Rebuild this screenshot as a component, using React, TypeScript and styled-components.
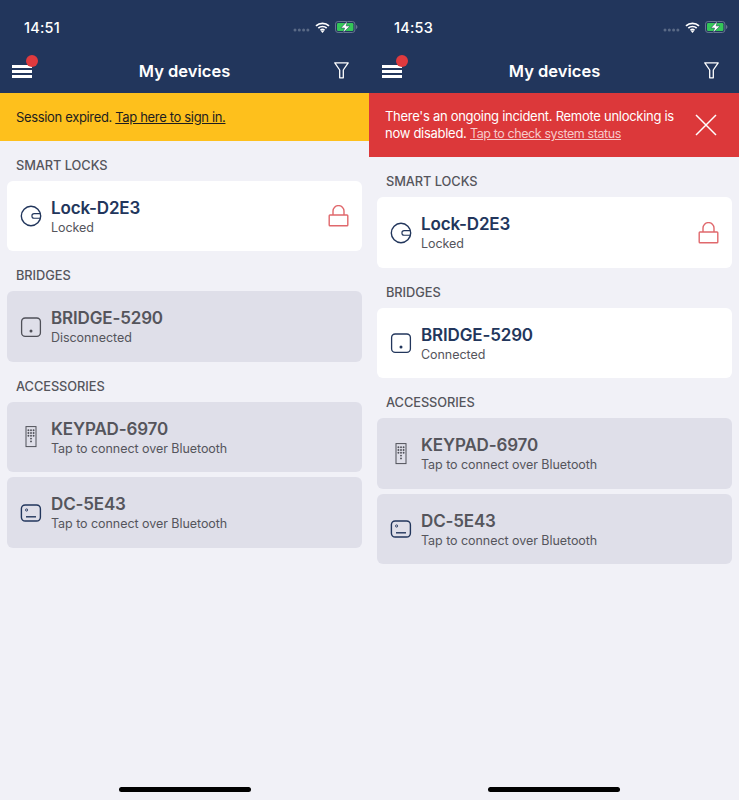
import React from 'react';
import styled, { createGlobalStyle } from 'styled-components';

const GlobalStyle = createGlobalStyle`
  html, body {
    margin: 0;
    padding: 0;
    background: #f1f1f7;
    font-family: Inter, "Liberation Sans", sans-serif;
  }
`;

type IconKind = 'lock' | 'bridge' | 'keypad' | 'dc';

interface Device {
  name: string;
  status: string;
  icon: IconKind;
  active?: boolean;
  locked?: boolean;
}

interface Section {
  title: string;
  devices: Device[];
}

const DeviceIcon = ({ kind, muted }: { kind: IconKind; muted: boolean }) => {
  const color = muted ? '#4f5058' : '#22365c';
  if (kind === 'lock') {
    return (
      <svg width="22" height="22" viewBox="0 0 22 22" fill="none" stroke={color} strokeWidth="1.4">
        <circle cx="11" cy="11" r="9.7" />
        <path d="M20.500 8.600h-6.300a2.300 2.300 0 0 0 0 4.600h6.300" strokeWidth="1.1" />
      </svg>
    );
  }
  if (kind === 'bridge') {
    return (
      <svg width="22" height="22" viewBox="0 0 22 22" fill="none" stroke={color} strokeWidth="1.3">
        <rect x="1.6" y="2" width="18.8" height="18.4" rx="3.6" />
        <circle cx="11" cy="15" r="1.5" fill={color} stroke="none" />
      </svg>
    );
  }
  if (kind === 'keypad') {
    return (
      <svg width="22" height="22" viewBox="0 0 22 22" fill={color}>
        <rect x="6" y="0.600" width="10" height="20" fill="none" stroke={color} strokeWidth="1" />
        {[4.2, 7, 9.8].map(y =>
          [8.400, 11, 13.600].map(x => <circle key={`${x}-${y}`} cx={x} cy={y} r="0.950" />)
        )}
        <circle cx="11" cy="12.600" r="0.950" />
        <circle cx="11" cy="15.400" r="0.950" />
      </svg>
    );
  }
  return (
    <svg width="22" height="22" viewBox="0 0 22 22" fill="none" stroke="#22365c" strokeWidth="1.4">
      <rect x="1.4" y="3" width="19" height="16" rx="3.8" />
      <circle cx="6.600" cy="8" r="1.100" strokeWidth="0.900" />
      <path d="M6 14.800h10" />
    </svg>
  );
};

const PadlockIcon = () => (
  <svg width="22" height="22" viewBox="0 0 22 22" fill="none" stroke="#e0686c" strokeWidth="1.4">
    <rect x="2.200" y="10" width="18.600" height="10.800" rx="0.800" />
    <path d="M6 10V6.100a5.500 5.500 0 0 1 11 0V10" />
  </svg>
);

const SignalDots = () => (
  <StatusDots width="17" height="4" viewBox="0 0 17 4" fill="#5a6a86">
    <circle cx="2" cy="2" r="1.5" />
    <circle cx="6.3" cy="2" r="1.5" />
    <circle cx="10.6" cy="2" r="1.5" />
    <circle cx="14.9" cy="2" r="1.5" />
  </StatusDots>
);

const WifiIcon = () => (
  <svg width="15" height="11" viewBox="0 0 15 11" fill="none" stroke="#fff" strokeWidth="1.7">
    <path d="M1 3.9a9.4 9.4 0 0 1 13 0" />
    <path d="M3.3 6.2a6 6 0 0 1 8.4 0" />
    <path d="M5.5 8.3a2.9 2.9 0 0 1 4 0" />
    <path d="M7.5 10.9 6 9.3a2.1 2.1 0 0 1 3 0z" fill="#fff" stroke="none" />
  </svg>
);

const BatteryIcon = () => (
  <svg width="23" height="12" viewBox="0 0 23 12">
    <rect x="0.5" y="0.5" width="19.4" height="11" rx="2.6" fill="none" stroke="#66758f" />
    <rect x="2" y="2" width="16.4" height="8" rx="1.2" fill="#35c759" />
    <path d="M21 4v4c.9-.3 1.4-1 1.4-2s-.5-1.700-1.400-2z" fill="#66758f" />
    <path d="M12.300 0.200 5.900 7h3.700l-1.500 4.800L15 5h-3.800z" fill="#fff" stroke="#22365c" strokeWidth="0.5" />
  </svg>
);

const FilterIcon = () => (
  <svg width="15" height="17" viewBox="0 0 15 17" fill="none" stroke="#fff" strokeWidth="1.3">
    <path d="M0.800 0.900h13.400L9.300 8v7.800H5.700V8z" strokeLinejoin="round" />
  </svg>
);

const CloseIcon = () => (
  <svg width="22" height="22" viewBox="0 0 22 22" stroke="#fff" strokeWidth="1.5">
    <path d="M1 1l20 20M21 1L1 21" />
  </svg>
);

const DeviceCard = ({ device }: { device: Device }) => (
  <Card $active={!!device.active}>
    <IconSlot>
      <DeviceIcon kind={device.icon} muted={!device.active} />
    </IconSlot>
    <CardText>
      <DeviceName $active={!!device.active}>{device.name}</DeviceName>
      <DeviceStatus>{device.status}</DeviceStatus>
    </CardText>
    {device.locked && <PadlockIcon />}
  </Card>
);

interface PhoneProps {
  time: string;
  banner: React.ReactNode;
  sections: Section[];
  inset?: number;
}

const Phone = ({ time, banner, sections, inset = 0 }: PhoneProps) => (
  <Screen $inset={inset}>
    <Header>
      <StatusBar>
        <Clock>{time}</Clock>
        <StatusIcons>
          <SignalDots />
          <WifiIcon />
          <BatteryIcon />
        </StatusIcons>
      </StatusBar>
      <NavBar>
        <MenuButton>
          <MenuBars>
            <span />
            <span />
            <span />
          </MenuBars>
          <MenuDot />
        </MenuButton>
        <Title>My devices</Title>
        <FilterIcon />
      </NavBar>
    </Header>
    {banner}
    <Content>
      {sections.map(section => (
        <React.Fragment key={section.title}>
          <SectionLabel>{section.title}</SectionLabel>
          <CardList>
            {section.devices.map(device => (
              <DeviceCard key={device.name} device={device} />
            ))}
          </CardList>
        </React.Fragment>
      ))}
    </Content>
    <HomeIndicator />
  </Screen>
);

const buildSections = (bridgeConnected: boolean): Section[] => [
  {
    title: 'SMART LOCKS',
    devices: [{ name: 'Lock-D2E3', status: 'Locked', icon: 'lock', active: true, locked: true }],
  },
  {
    title: 'BRIDGES',
    devices: [
      {
        name: 'BRIDGE-5290',
        status: bridgeConnected ? 'Connected' : 'Disconnected',
        icon: 'bridge',
        active: bridgeConnected,
      },
    ],
  },
  {
    title: 'ACCESSORIES',
    devices: [
      { name: 'KEYPAD-6970', status: 'Tap to connect over Bluetooth', icon: 'keypad' },
      { name: 'DC-5E43', status: 'Tap to connect over Bluetooth', icon: 'dc' },
    ],
  },
];

const App = () => (
  <>
    <GlobalStyle />
    <Page>
      <Phone
        time="14:51"
        sections={buildSections(false)}
        banner={
          <WarningBanner>
            Session expired. <u>Tap here to sign in.</u>
          </WarningBanner>
        }
      />
      <Phone
        time="14:53"
        inset={1}
        sections={buildSections(true)}
        banner={
          <IncidentBanner>
            <IncidentText>
              <IncidentLine>There's an ongoing incident. Remote unlocking is</IncidentLine>
              <IncidentLine>
                now disabled. <IncidentLink>Tap to check system status</IncidentLink>
              </IncidentLine>
            </IncidentText>
            <CloseIcon />
          </IncidentBanner>
        }
      />
    </Page>
  </>
);

const Page = styled.div`
  display: grid;
  grid-template-columns: 369px 370px;
  width: 739px;
  height: 800px;
  overflow: hidden;
  background: #f1f1f7;
`;

const Screen = styled.div<{ $inset: number }>`
  --inset: ${props => props.$inset}px;
  display: flex;
  flex-direction: column;
  height: 800px;
  background: #f1f1f7;
`;

const Header = styled.div`
  height: 93px;
  flex-shrink: 0;
  background: #22365c;
  display: flex;
  flex-direction: column;
`;

const StatusBar = styled.div`
  height: 48px;
  padding: 6px 11px 0 calc(24px + var(--inset));
  box-sizing: border-box;
  display: flex;
  align-items: center;
  justify-content: space-between;
`;

const Clock = styled.div`
  color: #fff;
  font-size: 14.500px;
  font-weight: 500;
  letter-spacing: 0.2px;
`;

const StatusIcons = styled.div`
  display: flex;
  align-items: center;
  gap: 5px;
`;

const StatusDots = styled.svg`
  margin-top: 6px;
`;

const NavBar = styled.div`
  flex: 1;
  display: flex;
  align-items: center;
  justify-content: space-between;
  padding: 0 20px 0 calc(12px + var(--inset));
`;

const MenuButton = styled.div`
  position: relative;
  width: 20px;
  height: 13px;
  margin-top: 2px;
`;

const MenuBars = styled.div`
  display: flex;
  flex-direction: column;
  gap: 2px;

  span {
    display: block;
    height: 3px;
    background: #fff;
  }
`;

const MenuDot = styled.div`
  position: absolute;
  top: -10px;
  left: 14px;
  width: 12px;
  height: 12px;
  border-radius: 50%;
  background: #e03a3e;
`;

const Title = styled.div`
  color: #fff;
  font-size: 16.500px;
  font-weight: 600;
  letter-spacing: 0;
  margin-left: 3px;
`;

const WarningBanner = styled.div`
  height: 47.750px;
  flex-shrink: 0;
  box-sizing: border-box;
  background: #fec01c;
  color: #1d1d1f;
  font-size: 13px;
  display: flex;
  align-items: center;
  white-space: pre;
  padding: 0 16px;
  letter-spacing: -0.340px;
`;

const IncidentBanner = styled.div`
  height: 64.250px;
  flex-shrink: 0;
  box-sizing: border-box;
  background: #dc383a;
  color: #fff;
  display: flex;
  align-items: center;
  justify-content: space-between;
  padding: 0 22px 0 calc(15px + var(--inset));
`;

const IncidentText = styled.div`
  display: flex;
  flex-direction: column;
  font-size: 13px;
  line-height: 17.500px;
  letter-spacing: -0.280px;
`;

const IncidentLine = styled.div`
  white-space: pre;
`;

const IncidentLink = styled.span`
  text-decoration: underline;
  color: #f6c9ca;
  font-size: 12.500px;
  letter-spacing: -0.400px;
`;

const Content = styled.div`
  flex: 1;
  padding: 0 7px 0 calc(7px + var(--inset));
`;

const SectionLabel = styled.div`
  height: 40px;
  box-sizing: border-box;
  padding: 16.800px 9px 0;
  font-size: 12.800px;
  font-weight: 500;
  line-height: 16px;
  color: #55555c;
  letter-spacing: -0.050px;
`;

const CardList = styled.div`
  display: flex;
  flex-direction: column;
  gap: 5px;
`;

const Card = styled.div<{ $active: boolean }>`
  height: 70.500px;
  box-sizing: border-box;
  border-radius: 6px;
  background: ${props => (props.$active ? '#ffffff' : '#dfdfe9')};
  display: flex;
  align-items: center;
  padding: 0 13px;
`;

const IconSlot = styled.div`
  width: 22px;
  height: 22px;
  margin-right: 9px;
  flex-shrink: 0;
`;

const CardText = styled.div`
  flex: 1;
  display: flex;
  flex-direction: column;
  padding-top: 1px;
`;

const DeviceName = styled.div<{ $active: boolean }>`
  font-size: 17px;
  font-weight: 600;
  line-height: 21px;
  letter-spacing: -0.150px;
  color: ${props => (props.$active ? '#22365c' : '#55555c')};
`;

const DeviceStatus = styled.div`
  font-size: 12.500px;
  line-height: 17px;
  color: #55555c;
  letter-spacing: -0.050px;
`;

const HomeIndicator = styled.div`
  width: 132px;
  height: 5px;
  border-radius: 3px;
  background: #000;
  margin: 0 auto 8.500px;
  flex-shrink: 0;
`;

export default App;
